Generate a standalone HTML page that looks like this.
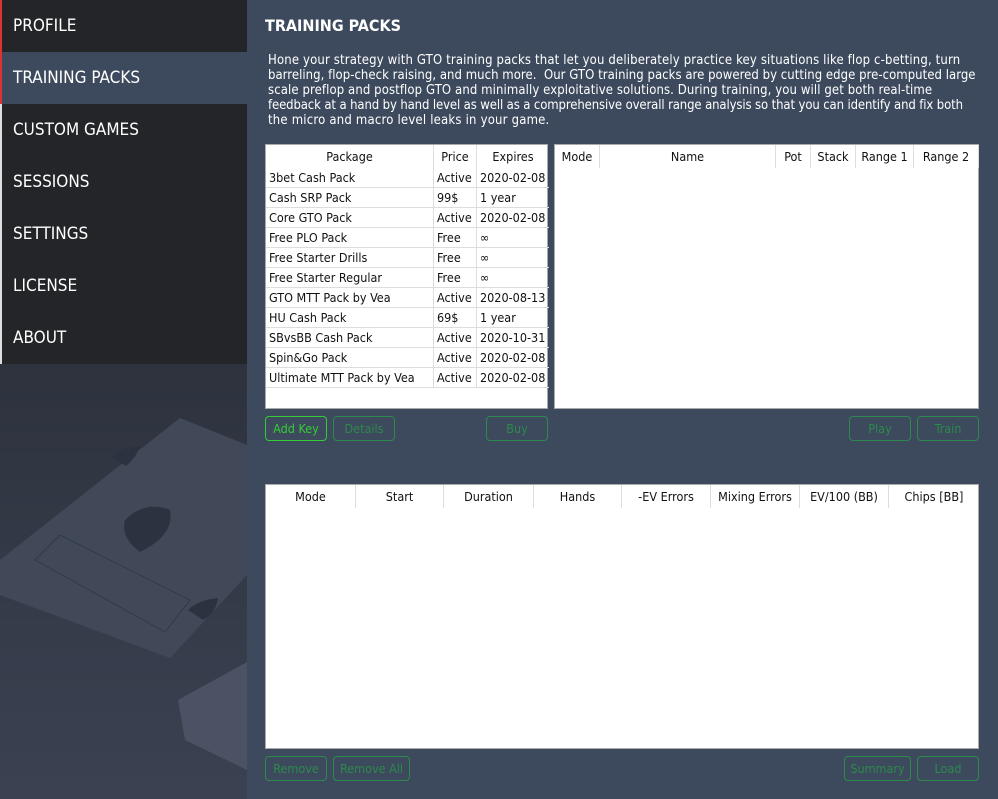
<!DOCTYPE html>
<html><head><meta charset="utf-8"><style>
*{box-sizing:border-box;margin:0;padding:0}
body{width:998px;height:799px;overflow:hidden;background:#3d4a5e;font-family:"DejaVu Sans Condensed","Liberation Sans",sans-serif;position:relative}
#side{position:absolute;left:0;top:0;width:247px;height:799px;background:linear-gradient(#24272d,#2c313b 40%,#3a4252 100%);overflow:hidden}
.it{position:absolute;left:0;width:247px;height:52px;color:#fff;font-size:17px;line-height:52px;padding-left:11px;background:#232529;border-left:2px solid #ddd}
.abs{position:absolute}
.tbl{position:absolute;background:#fff;border:1px solid #aaa;font-size:12.5px;color:#111}
.c{position:absolute;top:0;height:23px;line-height:23px;text-align:center;border-right:1px solid #ddd}
.row{position:absolute;left:0;height:20px;line-height:20px;border-bottom:1px solid #ddd}
.row span{position:absolute;top:0;padding-left:3px;border-right:1px solid #ddd;height:20px}
.btn{position:absolute;height:25px;border:1px solid #2c8a4a;border-radius:4px;color:#2c8a4a;font-size:12.5px;text-align:center;line-height:23px}
#p{position:absolute;left:268px;top:53px;color:#fff;font-size:13px;line-height:15px;white-space:nowrap}
</style></head><body>
<div id="side">
<svg class="abs" style="left:0;top:0" width="247" height="799">
<polygon points="180,418 247,445 247,575 170,658 0,595 0,560" fill="#414959"/>
<polygon points="35,560 165,632 190,600 60,535" fill="none" stroke="#333a47" stroke-width="1"/>
<polygon points="178,700 247,662 247,770 185,740" fill="#4a5263"/>
<path d="M112,458 q10,-12 28,-12 q-4,12 -14,20 z M125,520 q20,-20 45,-10 q5,25 -30,42 q-20,-15 -15,-32 z M188,610 q10,-10 30,-12 q-2,15 -15,22 z" fill="#2c3340"/>
</svg>
<div class="it" style="top:0;border-left-color:#d33">PROFILE</div>
<div class="it" style="top:52px;background:#3d4a5e;border-left-color:#d33">TRAINING PACKS</div>
<div class="it" style="top:104px">CUSTOM GAMES</div>
<div class="it" style="top:156px">SESSIONS</div>
<div class="it" style="top:208px">SETTINGS</div>
<div class="it" style="top:260px">LICENSE</div>
<div class="it" style="top:312px">ABOUT</div>
</div>
<div class="abs" style="left:265px;top:16px;color:#fff;font-weight:bold;font-size:16px">TRAINING PACKS</div>
<div id="p"><div style="letter-spacing:.15px">Hone your strategy with GTO training packs that let you deliberately practice key situations like flop c-betting, turn</div><div style="letter-spacing:.04px">barreling, flop-check raising, and much more.&nbsp; Our GTO training packs are powered by cutting edge pre-computed large</div><div style="letter-spacing:.1px">scale preflop and postflop GTO and minimally exploitative solutions. During training, you will get both real-time</div><div style="letter-spacing:-.12px">feedback at a hand by hand level as well as a comprehensive overall range analysis so that you can identify and fix both</div><div style="letter-spacing:.2px">the micro and macro level leaks in your game.</div></div>

<div class="tbl" style="left:265px;top:144px;width:283px;height:265px">
<div class="c" style="left:0;width:168px">Package</div><div class="c" style="left:168px;width:43px">Price</div><div class="c" style="left:211px;width:72px;border:0">Expires</div>
<div id="rows"></div>
</div>
<div class="tbl" style="left:554px;top:144px;width:425px;height:265px">
<div class="c" style="left:0;width:45px">Mode</div><div class="c" style="left:45px;width:176px">Name</div><div class="c" style="left:221px;width:35px">Pot</div><div class="c" style="left:256px;width:45px">Stack</div><div class="c" style="left:301px;width:58px">Range 1</div><div class="c" style="left:359px;width:65px">Range 2</div>
</div>
<div class="btn" style="left:265px;top:416px;width:62px;color:#3c3;border-color:#3c3">Add Key</div>
<div class="btn" style="left:333px;top:416px;width:62px">Details</div>
<div class="btn" style="left:486px;top:416px;width:62px">Buy</div>
<div class="btn" style="left:849px;top:416px;width:62px">Play</div>
<div class="btn" style="left:917px;top:416px;width:62px">Train</div>

<div class="tbl" style="left:265px;top:484px;width:714px;height:265px">
<div class="c" style="left:0;width:90px">Mode</div><div class="c" style="left:90px;width:88px">Start</div><div class="c" style="left:178px;width:90px">Duration</div><div class="c" style="left:268px;width:88px">Hands</div><div class="c" style="left:356px;width:89px">-EV Errors</div><div class="c" style="left:445px;width:89px">Mixing Errors</div><div class="c" style="left:534px;width:89px">EV/100 (BB)</div><div class="c" style="left:623px;width:90px;border:0">Chips [BB]</div>
</div>
<div class="btn" style="left:265px;top:756px;width:62px">Remove</div>
<div class="btn" style="left:333px;top:756px;width:77px">Remove All</div>
<div class="btn" style="left:844px;top:756px;width:67px">Summary</div>
<div class="btn" style="left:917px;top:756px;width:62px">Load</div>
<script>
var d=[["3bet Cash Pack","Active","2020-02-08"],["Cash SRP Pack","99$","1 year"],["Core GTO Pack","Active","2020-02-08"],["Free PLO Pack","Free","∞"],["Free Starter Drills","Free","∞"],["Free Starter Regular","Free","∞"],["GTO MTT Pack by Vea","Active","2020-08-13"],["HU Cash Pack","69$","1 year"],["SBvsBB Cash Pack","Active","2020-10-31"],["Spin&Go Pack","Active","2020-02-08"],["Ultimate MTT Pack by Vea","Active","2020-02-08"]];
var h="";d.forEach(function(r,i){h+='<div class="row" style="top:'+(23+i*20)+'px;width:283px"><span style="left:0;width:168px">'+r[0].replace("&","&amp;")+'</span><span style="left:168px;width:43px">'+r[1]+'</span><span style="left:211px;width:72px;border:0">'+r[2]+'</span></div>'});
document.getElementById("rows").innerHTML=h;
</script>
</body></html>
